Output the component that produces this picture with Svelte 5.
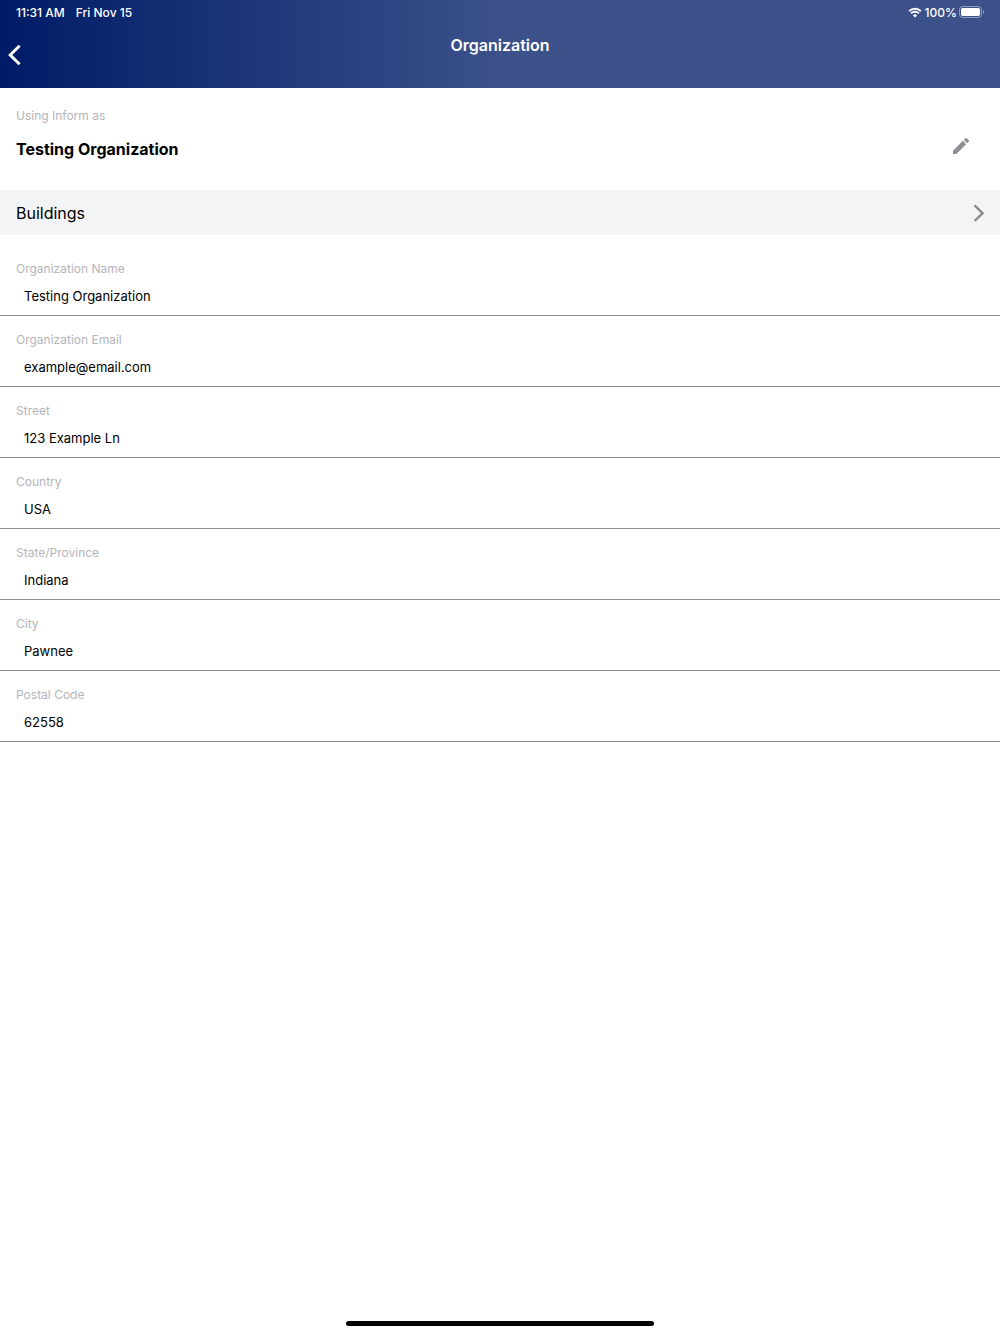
<script lang="ts">
  let organization = $state('Testing Organization');

  let fields = $state([
    { id: 'name', label: 'Organization Name', type: 'text', value: 'Testing Organization' },
    { id: 'email', label: 'Organization Email', type: 'email', value: 'example@email.com' },
    { id: 'street', label: 'Street', type: 'text', value: '123 Example Ln' },
    { id: 'country', label: 'Country', type: 'text', value: 'USA' },
    { id: 'state', label: 'State/Province', type: 'text', value: 'Indiana' },
    { id: 'city', label: 'City', type: 'text', value: 'Pawnee' },
    { id: 'postal', label: 'Postal Code', type: 'text', value: '62558' }
  ]);
</script>

<div class="screen">
  <header class="header">
    <div class="status-bar">
      <span>11:31 AM</span>
      <span class="date">Fri Nov 15</span>
      <svg class="wifi" viewBox="0 0 14 11" aria-hidden="true">
        <path d="M1.1 4.1a8.5 8.5 0 0 1 11.8 0" />
        <path d="M3.1 6.3a5.6 5.6 0 0 1 7.8 0" />
        <path class="dot" d="M7 10.6 4.9 8.4a3 3 0 0 1 4.2 0z" />
      </svg>
      <span>100%</span>
      <svg class="battery" viewBox="0 0 26 12" aria-hidden="true">
        <rect class="shell" x="0.5" y="0.5" width="22" height="11" rx="3.2" />
        <rect class="charge" x="2" y="2" width="19" height="8" rx="1.8" />
        <path class="cap" d="M24 4v4c1.3-.5 1.3-3.5 0-4z" />
      </svg>
    </div>
    <nav class="nav">
      <button class="back-btn" aria-label="Back">
        <svg viewBox="0 0 14 22" aria-hidden="true">
          <path d="M11.6 1.8 2.2 11l9.4 9.2" />
        </svg>
      </button>
      <h1 class="title">Organization</h1>
    </nav>
  </header>

  <main class="content">
    <section class="current">
      <div>
        <p class="caption">Using Inform as</p>
        <h2 class="org-name">{organization}</h2>
      </div>
      <button class="edit-btn" aria-label="Edit organization">
        <svg viewBox="3 3 18 18" aria-hidden="true">
          <path d="M3 17.25V21h3.75L17.81 9.94l-3.75-3.75L3 17.25zM20.71 7.04c.39-.39.39-1.02 0-1.41l-2.34-2.34a.9959.9959 0 0 0-1.41 0l-1.83 1.83 3.75 3.75 1.83-1.83z" />
        </svg>
      </button>
    </section>

    <a class="buildings" href="#buildings">
      <span>Buildings</span>
      <svg viewBox="0 0 12 18" aria-hidden="true">
        <path d="M1.6 1.4 9.6 9.2l-8 7.8" />
      </svg>
    </a>

    <form class="fields">
      {#each fields as field (field.id)}
        <div class="field">
          <label class="caption" for={field.id}>{field.label}</label>
          <input id={field.id} type={field.type} bind:value={field.value} />
        </div>
      {/each}
    </form>
  </main>

  <div class="home-indicator"></div>
</div>

<style>
  :global(body) {
    margin: 0;
    background: #fff;
  }

  .screen {
    display: flex;
    flex-direction: column;
    min-height: 100vh;
    font-family: Inter, 'Liberation Sans', sans-serif;
    color: #000;
  }

  .header {
    padding-bottom: 18px;
    background: linear-gradient(to right, #001b67, #3c518a 50%);
    color: #fff;
  }

  .status-bar {
    display: flex;
    align-items: center;
    height: 24px;
    padding: 0 15px 0 16px;
    font-size: 12px;
    font-weight: 500;
  }

  .date {
    margin-left: 11px;
    margin-right: auto;
  }

  .wifi {
    width: 14px;
    height: 11px;
    margin-right: 3px;
    fill: none;
    stroke: #fff;
    stroke-width: 2;
  }

  .wifi .dot {
    fill: #fff;
    stroke: none;
  }

  .battery {
    width: 26px;
    height: 12px;
    margin-left: 2px;
  }

  .shell {
    fill: none;
    stroke: #fff;
    stroke-opacity: 0.45;
  }

  .charge {
    fill: #fff;
  }

  .cap {
    fill: #fff;
    fill-opacity: 0.5;
  }

  .nav {
    display: grid;
    grid-template-columns: 1fr auto 1fr;
    align-items: start;
    height: 46px;
  }

  button {
    padding: 0;
    border: none;
    background: transparent;
    cursor: pointer;
  }

  .back-btn {
    justify-self: start;
    margin-top: 20px;
    padding: 0 8px;
  }

  .back-btn svg {
    display: block;
    width: 14px;
    height: 22px;
    fill: none;
    stroke: #fff;
    stroke-width: 3;
  }

  .title {
    margin: 10px 0 0;
    font-size: 16px;
    line-height: 22px;
    font-weight: 600;
  }

  .current {
    display: flex;
    align-items: flex-end;
    justify-content: space-between;
    padding: 20px 31px 30px 16px;
  }

  .caption {
    display: block;
    margin: 0;
    font-size: 12px;
    line-height: 16px;
    color: #b5b5bb;
  }

  .org-name {
    margin: 14px 0 0;
    font-size: 16px;
    line-height: 22px;
    font-weight: 700;
  }

  .edit-btn {
    margin-bottom: 6px;
  }

  .edit-btn svg {
    display: block;
    width: 16px;
    height: 16px;
    fill: #8e8e93;
  }

  .buildings {
    display: flex;
    align-items: center;
    justify-content: space-between;
    height: 45px;
    padding: 0 15px 0 16px;
    background: #f3f4f6;
    color: #000;
    font-size: 16px;
    text-decoration: none;
  }

  .buildings svg {
    width: 12px;
    height: 18px;
    fill: none;
    stroke: #8a8a8d;
    stroke-width: 2.4;
  }

  .fields {
    padding-top: 10px;
  }

  .field {
    padding-top: 16px;
    border-bottom: 1px solid #8c8c8f;
  }

  .field .caption {
    padding: 0 16px;
  }

  .field input {
    display: block;
    box-sizing: border-box;
    width: 100%;
    height: 38px;
    padding: 0 24px;
    border: none;
    outline: none;
    background: transparent;
    font-family: inherit;
    font-size: 13px;
    color: #000;
  }

  .home-indicator {
    width: 308px;
    height: 5px;
    margin: auto auto 8px;
    border-radius: 3px;
    background: #000;
  }
</style>
